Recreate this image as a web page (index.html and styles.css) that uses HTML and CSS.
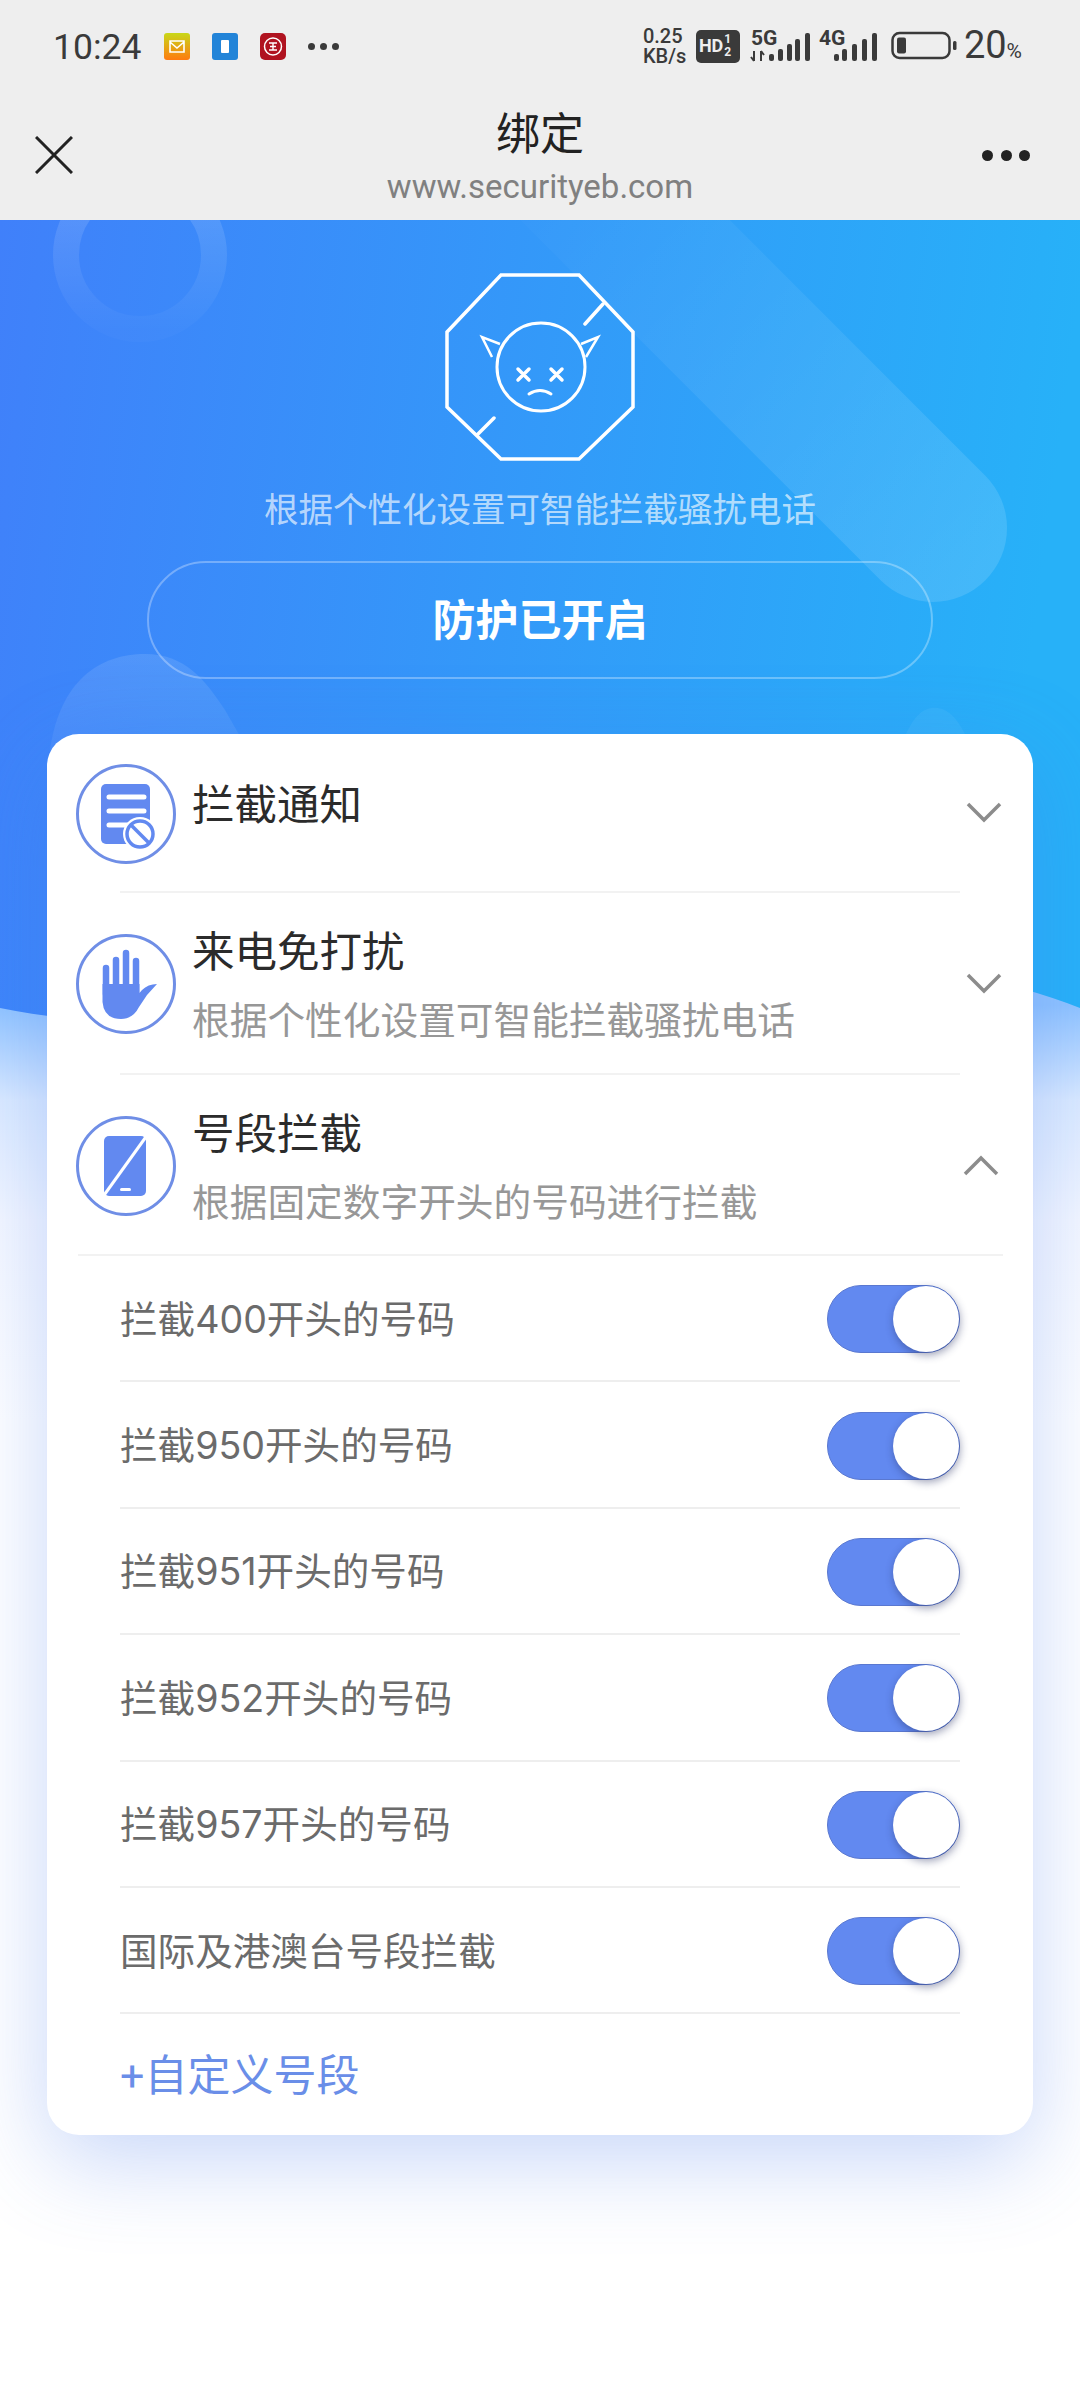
FILE: index.html
```html
<!DOCTYPE html>
<html lang="zh-CN">
<head>
    <meta charset="UTF-8">
    <meta name="viewport" content="width=device-width, initial-scale=1.0">
    <title>绑定</title>
    <link rel="stylesheet" href="styles.css">
</head>
<body>
    <div class="statusbar">
        <div class="status-left">
            <span class="clock">10:24</span>
            <svg class="app-icon" viewBox="0 0 26 27">
                <defs>
                    <linearGradient id="mailGrad" x1="0" y1="0" x2="0" y2="1">
                        <stop offset="0" stop-color="#c8d818"/>
                        <stop offset="1" stop-color="#ff7a10"/>
                    </linearGradient>
                </defs>
                <rect width="26" height="27" rx="3" fill="url(#mailGrad)"/>
                <path d="M6 8h14v11H6zM6 9l7 6 7-6" fill="none" stroke="#fff" stroke-width="1.6"/>
            </svg>
            <svg class="app-icon" viewBox="0 0 26 27">
                <rect width="26" height="27" rx="3" fill="#2284d8"/>
                <rect x="9" y="7" width="8" height="13" rx="1" fill="#fff"/>
            </svg>
            <svg class="app-icon" viewBox="0 0 26 27">
                <rect width="26" height="27" rx="5" fill="#b01320"/>
                <circle cx="13" cy="13.500" r="8.500" fill="none" stroke="#fff" stroke-width="1.500"/>
                <path d="M9 10h8M13 10v7M9 17h8M10 13.500h6" fill="none" stroke="#fff" stroke-width="1.400"/>
            </svg>
            <span class="status-dots"><i></i><i></i><i></i></span>
        </div>
        <div class="status-right">
            <span class="speed">0.25<br>KB/s</span>
            <span class="hd-badge">HD<span class="hd-nums">1<br>2</span></span>
            <span class="signal">
                <span class="net-label">5G</span>
                <svg class="signal-bars" width="68" height="32" viewBox="0 0 68 32">
                    <path d="M4 21v10M1 27l3 4M11 21v10M11 21l3 4" fill="none" stroke="#3a3a3a" stroke-width="2"/>
                    <rect x="19" y="24" width="5" height="7" rx="2" fill="#3a3a3a"/>
                    <rect x="28" y="19" width="5" height="12" rx="2" fill="#3a3a3a"/>
                    <rect x="37" y="14" width="5" height="17" rx="2" fill="#3a3a3a"/>
                    <rect x="45" y="9" width="5" height="22" rx="2" fill="#3a3a3a"/>
                    <rect x="55" y="3" width="5" height="28" rx="2" fill="#3a3a3a"/>
                </svg>
            </span>
            <span class="signal signal-4g">
                <span class="net-label">4G</span>
                <svg class="signal-bars" width="60" height="32" viewBox="0 0 60 32">
                    <rect x="16" y="24" width="5" height="7" rx="2" fill="#3a3a3a"/>
                    <rect x="24" y="19" width="5" height="12" rx="2" fill="#3a3a3a"/>
                    <rect x="34" y="14" width="5" height="17" rx="2" fill="#3a3a3a"/>
                    <rect x="44" y="9" width="5" height="22" rx="2" fill="#3a3a3a"/>
                    <rect x="54" y="3" width="5" height="28" rx="2" fill="#3a3a3a"/>
                </svg>
            </span>
            <svg class="battery" width="66" height="30" viewBox="0 0 66 30">
                <rect x="1.500" y="2" width="57" height="25" rx="7" fill="none" stroke="#3a3a3a" stroke-width="2.500"/>
                <rect x="6" y="6.500" width="9" height="16" rx="2" fill="#3a3a3a"/>
                <rect x="62" y="10" width="3.500" height="9" rx="1.500" fill="#3a3a3a"/>
            </svg>
            <span class="percent">20<small>%</small></span>
        </div>
    </div>

    <div class="navbar">
        <svg class="nav-close" width="38" height="38" viewBox="0 0 38 38">
            <path d="M1 1l36 36M37 1L1 37" stroke="#222" stroke-width="3" fill="none"/>
        </svg>
        <div class="nav-title">
            <div class="nav-name">绑定</div>
            <div class="nav-url">www.securityeb.com</div>
        </div>
        <span class="nav-more"><i></i><i></i><i></i></span>
    </div>

    <div class="page">
        <svg class="page-bg" width="1080" height="900" viewBox="0 0 1080 900">
            <defs>
                <linearGradient id="heroGrad" x1="0" y1="0" x2="1" y2="0.100">
                    <stop offset="0" stop-color="#4080fa"/>
                    <stop offset="1" stop-color="#27b1f8"/>
                </linearGradient>
                <linearGradient id="bandGrad" gradientUnits="userSpaceOnUse" x1="500" y1="0" x2="940" y2="420">
                    <stop offset="0" stop-color="#fff" stop-opacity="0.010"/>
                    <stop offset="1" stop-color="#fff" stop-opacity="0.130"/>
                </linearGradient>
                <linearGradient id="ringGrad" x1="0" y1="0" x2="0" y2="1">
                    <stop offset="0" stop-color="#fff" stop-opacity="0.160"/>
                    <stop offset="1" stop-color="#fff" stop-opacity="0.020"/>
                </linearGradient>
                <linearGradient id="blobGrad" x1="0" y1="0" x2="0" y2="1">
                    <stop offset="0" stop-color="#fff" stop-opacity="0.110"/>
                    <stop offset="1" stop-color="#fff" stop-opacity="0.040"/>
                </linearGradient>
            </defs>
            <path d="M0 0H1080V788Q1055 778 1020 768C800 700 300 850 0 788Z" fill="url(#heroGrad)"/>
            <circle cx="140" cy="35" r="74" fill="none" stroke="url(#ringGrad)" stroke-width="26"/>
            <path d="M568 -57L933 308" stroke="url(#bandGrad)" stroke-width="148" stroke-linecap="round" fill="none"/>
            <path d="M50 530C60 460 100 434 145 434C185 434 205 460 225 490L265 560H50Z" fill="url(#blobGrad)"/>
            <path d="M905 516C915 494 925 486 938 488C950 490 958 500 966 516Z" fill="#fff" fill-opacity="0.050"/>
        </svg>

        <div class="hero">
            <svg class="hero-icon" width="240" height="210" viewBox="0 0 240 210">
                <g fill="none" stroke="#fff">
                    <path d="M81 15H159L213 72V147L159 199H81L27 147V72Z" stroke-width="3.500"/>
                    <path d="M183 44L165 64M57 175L74 158" stroke-linecap="round" stroke-width="3.500"/>
                    <circle cx="121" cy="107" r="44" stroke-width="3"/>
                    <path d="M80 84L62 77L72 97M161 84L178 77L166 97" stroke-width="2.500"/>
                    <path d="M98 109L109 120M109 109L98 120M131 109L142 120M142 109L131 120" stroke-linecap="round" stroke-width="3.500"/>
                    <path d="M109 134Q120 127 131 134" stroke-linecap="round" stroke-width="3"/>
                </g>
            </svg>
            <p class="hero-text">根据个性化设置可智能拦截骚扰电话</p>
            <div class="hero-btn">防护已开启</div>
        </div>

        <div class="card">
            <div class="row row-first">
                <svg class="row-icon" viewBox="0 0 100 100">
                    <circle cx="50" cy="50" r="48.500" class="ring"/>
                    <rect x="25" y="20" width="49" height="60" rx="5" fill="#6289f0"/>
                    <path d="M33 33H68M33 47H68M33 61H55" stroke="#fff" stroke-width="5" stroke-linecap="round"/>
                    <circle cx="64" cy="70" r="17" fill="#fff"/>
                    <circle cx="64" cy="70" r="13" fill="none" stroke="#6289f0" stroke-width="3.500"/>
                    <path d="M55 61L73 79" stroke="#6289f0" stroke-width="3.500"/>
                </svg>
                <div class="row-text">
                    <div class="row-title">拦截通知</div>
                </div>
                <svg class="chevron" width="36" height="22" viewBox="0 0 36 22">
                    <path d="M2 3L18 19L34 3"/>
                </svg>
            </div>
            <div class="row">
                <svg class="row-icon" viewBox="0 0 100 100">
                    <circle cx="50" cy="50" r="48.500" class="ring"/>
                    <path d="M30 34V60M40 26V60M50 19V60M60 27V60" stroke="#6289f0" stroke-width="6.500" stroke-linecap="round"/>
                    <path d="M26.500 52V68Q28 85 45 85Q57 85 63 73L71 61L81 50Q72 50 66 56L63.500 59V50H26.500Z" fill="#6289f0"/>
                </svg>
                <div class="row-text">
                    <div class="row-title">来电免打扰</div>
                    <div class="row-sub">根据个性化设置可智能拦截骚扰电话</div>
                </div>
                <svg class="chevron" width="36" height="22" viewBox="0 0 36 22">
                    <path d="M2 3L18 19L34 3"/>
                </svg>
            </div>
            <div class="row row-open">
                <svg class="row-icon" viewBox="0 0 100 100">
                    <circle cx="50" cy="50" r="48.500" class="ring"/>
                    <rect x="28" y="20" width="42" height="60" rx="5" fill="#6289f0"/>
                    <path d="M72 18L26 82" stroke="#fff" stroke-width="3"/>
                    <rect x="44" y="72" width="11" height="3" rx="1.500" fill="#fff"/>
                </svg>
                <div class="row-text">
                    <div class="row-title">号段拦截</div>
                    <div class="row-sub">根据固定数字开头的号码进行拦截</div>
                </div>
                <svg class="chevron chevron-up" width="36" height="22" viewBox="0 0 36 22">
                    <path d="M2 19L18 3L34 19"/>
                </svg>
            </div>
            <div class="toggle-row"><span class="toggle-label">拦截400开头的号码</span><span class="toggle"></span></div>
            <div class="toggle-row"><span class="toggle-label">拦截950开头的号码</span><span class="toggle"></span></div>
            <div class="toggle-row"><span class="toggle-label">拦截951开头的号码</span><span class="toggle"></span></div>
            <div class="toggle-row"><span class="toggle-label">拦截952开头的号码</span><span class="toggle"></span></div>
            <div class="toggle-row"><span class="toggle-label">拦截957开头的号码</span><span class="toggle"></span></div>
            <div class="toggle-row"><span class="toggle-label">国际及港澳台号段拦截</span><span class="toggle"></span></div>
            <div class="custom-row">+自定义号段</div>
        </div>
    </div>
</body>
</html>
```

FILE: styles.css
```css
* {
    box-sizing: border-box;
}
html, body {
    margin: 0;
    padding: 0;
}
body {
    width: 1080px;
    height: 2400px;
    overflow: hidden;
    background-color: #fff;
    font-family: Roboto, "Noto Sans CJK SC", sans-serif;
}
.statusbar {
    height: 92px;
    background-color: #eeeeee;
    display: flex;
    justify-content: space-between;
    align-items: center;
    padding: 0 58px 0 53px;
    color: #3a3a3a;
}
.status-left {
    display: flex;
    align-items: center;
}
.clock {
    font-size: 35.500px;
    width: 111px;
    margin-top: 2px;
}
.app-icon {
    width: 26px;
    height: 27px;
    margin-right: 22px;
}
.status-dots {
    display: flex;
    gap: 5px;
}
.status-dots i {
    width: 7px;
    height: 7px;
    border-radius: 50%;
    background-color: #3a3a3a;
}
.status-right {
    display: flex;
    align-items: center;
}
.speed {
    font-size: 20px;
    line-height: 20px;
    font-weight: 500;
    width: 53px;
}
.hd-badge {
    display: flex;
    align-items: center;
    height: 33px;
    width: 44px;
    padding-left: 3px;
    margin-right: 10px;
    background-color: #3a3a3a;
    color: #eee;
    border-radius: 5px;
    font-size: 18px;
    line-height: 20px;
    font-weight: 700;
}
.hd-nums {
    font-size: 12px;
    line-height: 13px;
    margin-left: 1px;
}
.signal {
    position: relative;
    display: block;
    width: 68px;
    height: 32px;
}
.signal-4g {
    width: 60px;
    margin-right: 13px;
}
.net-label {
    position: absolute;
    left: 1px;
    top: -2px;
    font-size: 21px;
    line-height: 20px;
    font-weight: 700;
}
.signal-bars {
    position: absolute;
    left: 0;
    top: 0;
}
.battery {
    margin-right: 7px;
}
.percent {
    font-size: 38px;
    line-height: 44px;
    margin-top: 4px;
}
.percent small {
    font-size: 21px;
}
.navbar {
    height: 128px;
    background-color: #eeeeee;
    display: flex;
    align-items: center;
    justify-content: space-between;
    padding: 0 50px 0 35px;
    position: relative;
}
.nav-close {
    margin-top: -3px;
}
.nav-title {
    position: absolute;
    left: 0;
    right: 0;
    top: 18px;
    text-align: center;
}
.nav-name {
    font-size: 44px;
    line-height: 50px;
    color: #222;
}
.nav-url {
    font-size: 33px;
    line-height: 44px;
    margin-top: 5px;
    color: #808080;
}
.nav-more {
    display: flex;
    gap: 7.500px;
    margin-top: -1px;
}
.nav-more i {
    width: 11px;
    height: 11px;
    border-radius: 50%;
    background-color: #222;
}
.page {
    position: relative;
    height: 2180px;
    background: linear-gradient(#90c4ff 785px, #dcebff 880px, #f5f8ff 1000px, #fff 1200px);
}
.page-bg {
    position: absolute;
    left: 0;
    top: 0;
}
.hero {
    position: relative;
    display: flex;
    flex-direction: column;
    align-items: center;
    padding-top: 40px;
}
.hero-icon {
    display: block;
}
.hero-text {
    margin: 18px 0 0;
    font-size: 34.500px;
    line-height: 44px;
    color: rgba(255, 255, 255, 0.65);
}
.hero-btn {
    width: 786px;
    height: 118px;
    margin-top: 29px;
    padding-bottom: 7px;
    display: flex;
    align-items: center;
    justify-content: center;
    border: 2px solid rgba(255, 255, 255, 0.3);
    border-radius: 59px;
    color: #fff;
    font-size: 43px;
    font-weight: 700;
}
.card {
    position: relative;
    width: 986px;
    height: 1401px;
    margin: 55px 0 0 47px;
    background-color: #fff;
    border-radius: 32px;
    box-shadow: 0 25px 90px rgba(70, 120, 235, 0.3);
}
.row {
    height: 182px;
    display: flex;
    align-items: center;
    padding: 0 31px 0 29px;
    position: relative;
}
.row::after {
    content: "";
    position: absolute;
    left: 73px;
    right: 73px;
    bottom: 0;
    height: 2px;
    background-color: #f2f2f2;
}
.row-first {
    height: 159px;
}
.row-open {
    height: 181px;
}
.row-open::after {
    left: 31px;
    right: 30px;
}
.row-icon {
    width: 100px;
    height: 100px;
    flex: none;
    fill: none;
}
.ring {
    fill: none;
    stroke: #6f8ee6;
    stroke-width: 3;
}
.row-text {
    flex: 1;
    margin: 4px 0 0 16px;
}
.row-title {
    font-size: 42.500px;
    line-height: 54px;
    color: #2b2b2b;
}
.row-first .row-title {
    margin-top: -20px;
}
.row-sub {
    font-size: 37.700px;
    line-height: 50px;
    margin-top: 16px;
    color: #979797;
}
.chevron {
    flex: none;
    margin-top: -3px;
}
.chevron path {
    fill: none;
    stroke: #8c8c8c;
    stroke-width: 3.500;
}
.chevron-up {
    margin: 1px 3px 0 0;
}
.toggle-row {
    height: 126.400px;
    margin: 0 73px;
    padding-top: 2px;
    display: flex;
    align-items: center;
    justify-content: space-between;
    border-bottom: 2px solid #eeeeee;
    color: #6b6b6b;
    font-family: Inter, "Noto Sans CJK SC", sans-serif;
    font-size: 37.600px;
}
.toggle-label {
    margin-bottom: 6px;
}
.toggle {
    position: relative;
    display: block;
    width: 133px;
    height: 68px;
    border-radius: 34px;
    background-color: #6289f0;
    border: 1px solid #5a78d0;
}
.toggle::after {
    content: "";
    position: absolute;
    right: 0;
    top: 0;
    width: 66px;
    height: 66px;
    border-radius: 50%;
    background-color: #fff;
    box-shadow: 1px 3px 8px rgba(30, 40, 90, 0.45);
}
.custom-row {
    height: 116px;
    margin: 0 73px;
    display: flex;
    align-items: center;
    color: #6a8ee8;
    font-size: 43px;
}
```
